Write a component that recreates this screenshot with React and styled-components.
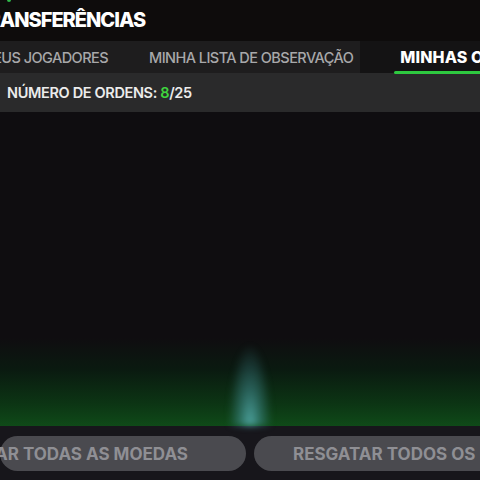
import React from "react";
import styled, { createGlobalStyle } from "styled-components";

const Global = createGlobalStyle`
  html, body { margin: 0; padding: 0; background: #0e0c0d; overflow: hidden; }
  body { font-family: Inter, "Noto Sans", sans-serif; }
  * { box-sizing: border-box; }
`;

const Screen = styled.div`
  width: 480px;
  height: 480px;
  display: flex;
  flex-direction: column;
  overflow: hidden;
  background: #0e0c0d;
`;

const Header = styled.header`
  height: 41px;
  display: flex;
  align-items: center;
  background: #0e0c0c;
  white-space: nowrap;
  position: relative;
`;

const Title = styled.h1`
  margin: -2px 0 0 -25px;
  font-size: 20px;
  font-weight: 800;
  color: #ffffff;
  letter-spacing: -1px;
`;

const Dot = styled.span`
  position: absolute;
  left: 7px;
  top: -2px;
  width: 4px;
  height: 4px;
  border-radius: 50%;
  background: #2fb84a;
`;

const TabBar = styled.nav`
  height: 32px;
  display: flex;
  background: #141314;
  white-space: nowrap;
`;

const TabGroup = styled.div`
  display: flex;
  background: #1e1d1e;
  padding-right: 6px;
`;

const Tab = styled.div`
  flex: none;
  display: flex;
  align-items: center;
  justify-content: ${(p) => (p.$end ? "flex-end" : "flex-start")};
  width: ${(p) => (p.$w ? `${p.$w}px` : "auto")};
  padding: 0 ${(p) => p.$pr ?? 20}px 0 ${(p) => p.$pl ?? 20}px;
  margin-left: ${(p) => p.$shift || 0}px;
  font-size: ${(p) => (p.$active ? 16 : 14.5)}px;
  letter-spacing: ${(p) => (p.$active ? 0.1 : -0.55)}px;
  font-weight: ${(p) => (p.$active ? 800 : 500)};
  color: ${(p) => (p.$active ? "#ffffff" : "#a8a8aa")};
  position: relative;
  &::after {
    content: "";
    display: ${(p) => (p.$active ? "block" : "none")};
    position: absolute;
    left: 0;
    right: -40px;
    bottom: -1px;
    height: 3px;
    background: #2ec940;
    border-radius: 2px 0 0 2px;
  }
`;

const OrderBar = styled.div`
  height: 39px;
  display: flex;
  align-items: center;
  padding-left: 7px;
  background: #2a2a2b;
  font-size: 14.5px;
  letter-spacing: -0.35px;
  font-weight: 600;
  color: #ececec;
`;

const Green = styled.span`
  color: #3fd43f;
`;

const Main = styled.main`
  flex: 1;
  position: relative;
  background: linear-gradient(
    to bottom,
    #0f0d10 0%,
    #0f0d10 72%,
    #0a1a10 82%,
    #0c3514 93%,
    #0f4a18 100%
  );
`;

const Glow = styled.div`
  position: absolute;
  left: 228px;
  bottom: 0;
  width: 44px;
  height: 82px;
  background: radial-gradient(
    ellipse 50% 100% at 50% 100%,
    rgba(90, 180, 185, 0.85) 0%,
    rgba(70, 150, 160, 0.5) 45%,
    rgba(40, 110, 120, 0) 100%
  );
  filter: blur(3px);
`;

const Footer = styled.footer`
  height: 54px;
  display: flex;
  align-items: center;
  gap: 8px;
  background: #17161b;
  white-space: nowrap;
`;

const PillButton = styled.button`
  flex: none;
  display: flex;
  align-items: center;
  justify-content: ${(p) => (p.$end ? "flex-end" : "flex-start")};
  width: ${(p) => p.$w}px;
  height: 35px;
  border: none;
  border-radius: 18px;
  background: #4a4a4f;
  color: #8f8f94;
  font-family: Inter, "Noto Sans", sans-serif;
  font-size: 17px;
  font-weight: 700;
  padding: 0 ${(p) => p.$pr || 0}px 0 ${(p) => p.$pl || 0}px;
  margin-top: 1px;
`;

export default function App() {
  return (
    <>
      <Global />
      <Screen>
        <Header>
          <Dot />
          <Title>TRANSFERÊNCIAS</Title>
        </Header>
        <TabBar>
          <TabGroup>
            <Tab $end $w={129} $pl={0} $pr={21}>MEUS JOGADORES</Tab>
            <Tab $pr={1}>MINHA LISTA DE OBSERVAÇÃO</Tab>
          </TabGroup>
          <Tab $active $shift={34} $pl={6}>MINHAS ORDENS</Tab>
        </TabBar>
        <OrderBar>
          NÚMERO DE ORDENS:&nbsp;<Green>8</Green>/25
        </OrderBar>
        <Main>
          <Glow />
        </Main>
        <Footer>
          <PillButton $end $w={246} $pr={58}>RESGATAR TODAS AS MOEDAS</PillButton>
          <PillButton $w={300} $pl={39}>RESGATAR TODOS OS ITENS</PillButton>
        </Footer>
      </Screen>
    </>
  );
}
